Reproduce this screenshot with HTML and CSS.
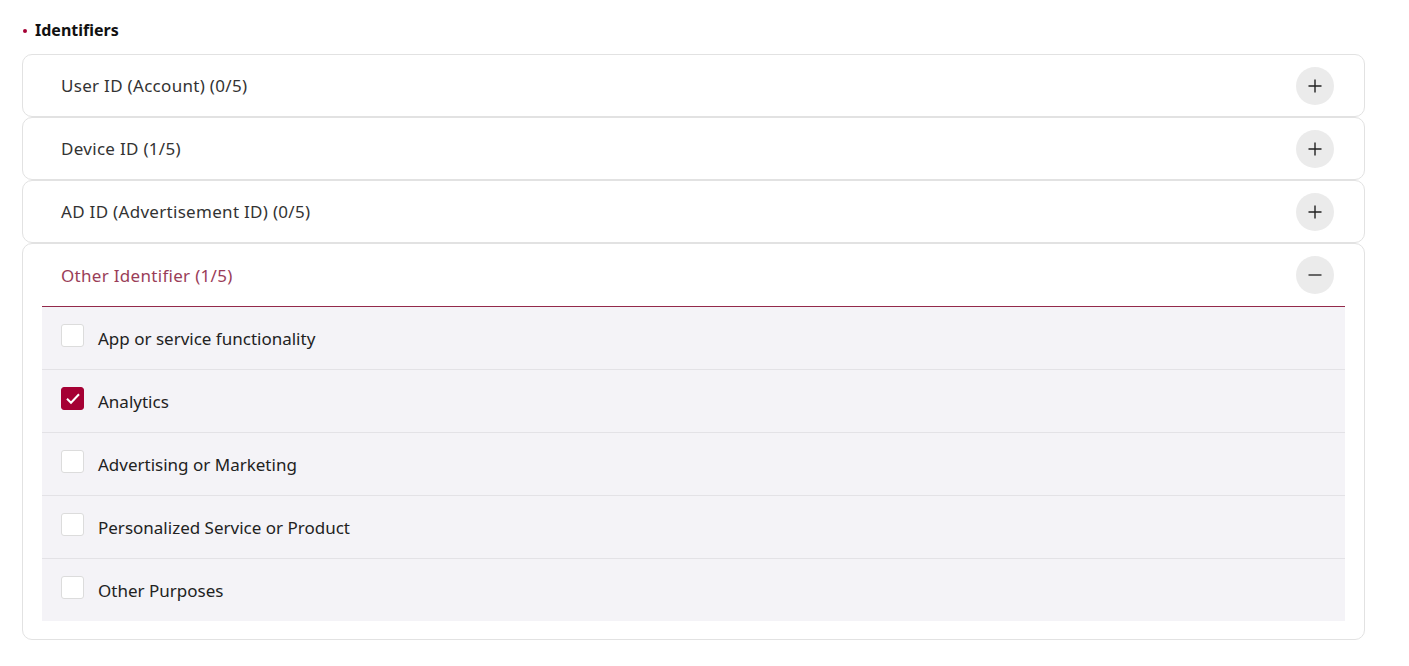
FILE: index.html
```html
<!DOCTYPE html>
<html lang="en">
<head>
    <meta charset="UTF-8">
    <title>Identifiers</title>
    <link rel="stylesheet" href="styles.css">
</head>
<body>
    <div class="section">
        <h3 class="section-title">Identifiers</h3>

        <div class="acc-item">
            <div class="acc-head">
                <span class="acc-label">User ID (Account) (0/5)</span>
                <button class="acc-btn" type="button">
                    <svg width="14" height="14" viewBox="0 0 14 14"><path d="M7 0.5v13M0.5 7h13" stroke="#222" stroke-width="1.4" fill="none"/></svg>
                </button>
            </div>
        </div>

        <div class="acc-item">
            <div class="acc-head">
                <span class="acc-label">Device ID (1/5)</span>
                <button class="acc-btn" type="button">
                    <svg width="14" height="14" viewBox="0 0 14 14"><path d="M7 0.5v13M0.5 7h13" stroke="#222" stroke-width="1.4" fill="none"/></svg>
                </button>
            </div>
        </div>

        <div class="acc-item">
            <div class="acc-head">
                <span class="acc-label">AD ID (Advertisement ID) (0/5)</span>
                <button class="acc-btn" type="button">
                    <svg width="14" height="14" viewBox="0 0 14 14"><path d="M7 0.5v13M0.5 7h13" stroke="#222" stroke-width="1.4" fill="none"/></svg>
                </button>
            </div>
        </div>

        <div class="acc-item open">
            <div class="acc-head">
                <span class="acc-label">Other Identifier (1/5)</span>
                <button class="acc-btn" type="button">
                    <svg width="14" height="14" viewBox="0 0 14 14"><path d="M0.5 7h13" stroke="#444" stroke-width="1.6" fill="none"/></svg>
                </button>
            </div>
            <ul class="acc-body">
                <li class="option"><span class="check"></span>App or service functionality</li>
                <li class="option"><span class="check checked">
                    <svg width="16" height="13" viewBox="0 0 16 13"><path d="M2 6.8l4 4 8-8.6" stroke="#fff" stroke-width="2" fill="none"/></svg>
                </span>Analytics</li>
                <li class="option"><span class="check"></span>Advertising or Marketing</li>
                <li class="option"><span class="check"></span>Personalized Service or Product</li>
                <li class="option"><span class="check"></span>Other Purposes</li>
            </ul>
        </div>
    </div>
</body>
</html>
```

FILE: styles.css
```css
body {
    margin: 0;
    font-family: "Noto Sans", Arial, sans-serif;
    color: #222;
    background: #fff;
}
.section {
    width: 1343px;
    margin-left: 22px;
    padding-top: 18px;
}
.section-title {
    position: relative;
    margin: 0 0 12px;
    padding-left: 13px;
    font-size: 16px;
    font-weight: 700;
    line-height: 24px;
    color: #111;
}
.section-title::before {
    content: "";
    position: absolute;
    left: 1px;
    top: 11px;
    width: 4px;
    height: 4px;
    border-radius: 50%;
    background: #a50034;
}
.acc-item {
    border: 1px solid #e2e2e2;
    border-radius: 10px;
    padding: 0 19px;
}
.acc-head {
    display: flex;
    align-items: center;
    justify-content: space-between;
    height: 61px;
    padding: 0 11px 0 19px;
}
.acc-label {
    font-size: 17px;
    letter-spacing: 0.3px;
    color: #333;
}
.acc-btn {
    display: flex;
    align-items: center;
    justify-content: center;
    width: 38px;
    height: 38px;
    border: 0;
    border-radius: 50%;
    background: #ebebeb;
    padding: 0;
}
.open .acc-head {
    height: 62px;
    border-bottom: 1px solid #93294a;
}
.open .acc-label {
    color: #9a3d58;
}
.acc-body {
    list-style: none;
    margin: 0 0 18px;
    padding: 0;
    background: #f4f3f7;
}
.option {
    display: flex;
    align-items: center;
    height: 62px;
    padding-left: 19px;
    border-top: 1px solid #e3e2e6;
    font-size: 17px;
    color: #222;
}
.option:first-child {
    border-top: 0;
}
.check {
    display: flex;
    align-items: center;
    justify-content: center;
    width: 21px;
    height: 21px;
    margin-right: 14px;
    border: 1px solid #dcdcdc;
    border-radius: 3px;
    background: #fff;
    box-sizing: content-box;
    margin-top: -6px;
}
.check.checked {
    background: #a50034;
    border-color: #a50034;
}
```
